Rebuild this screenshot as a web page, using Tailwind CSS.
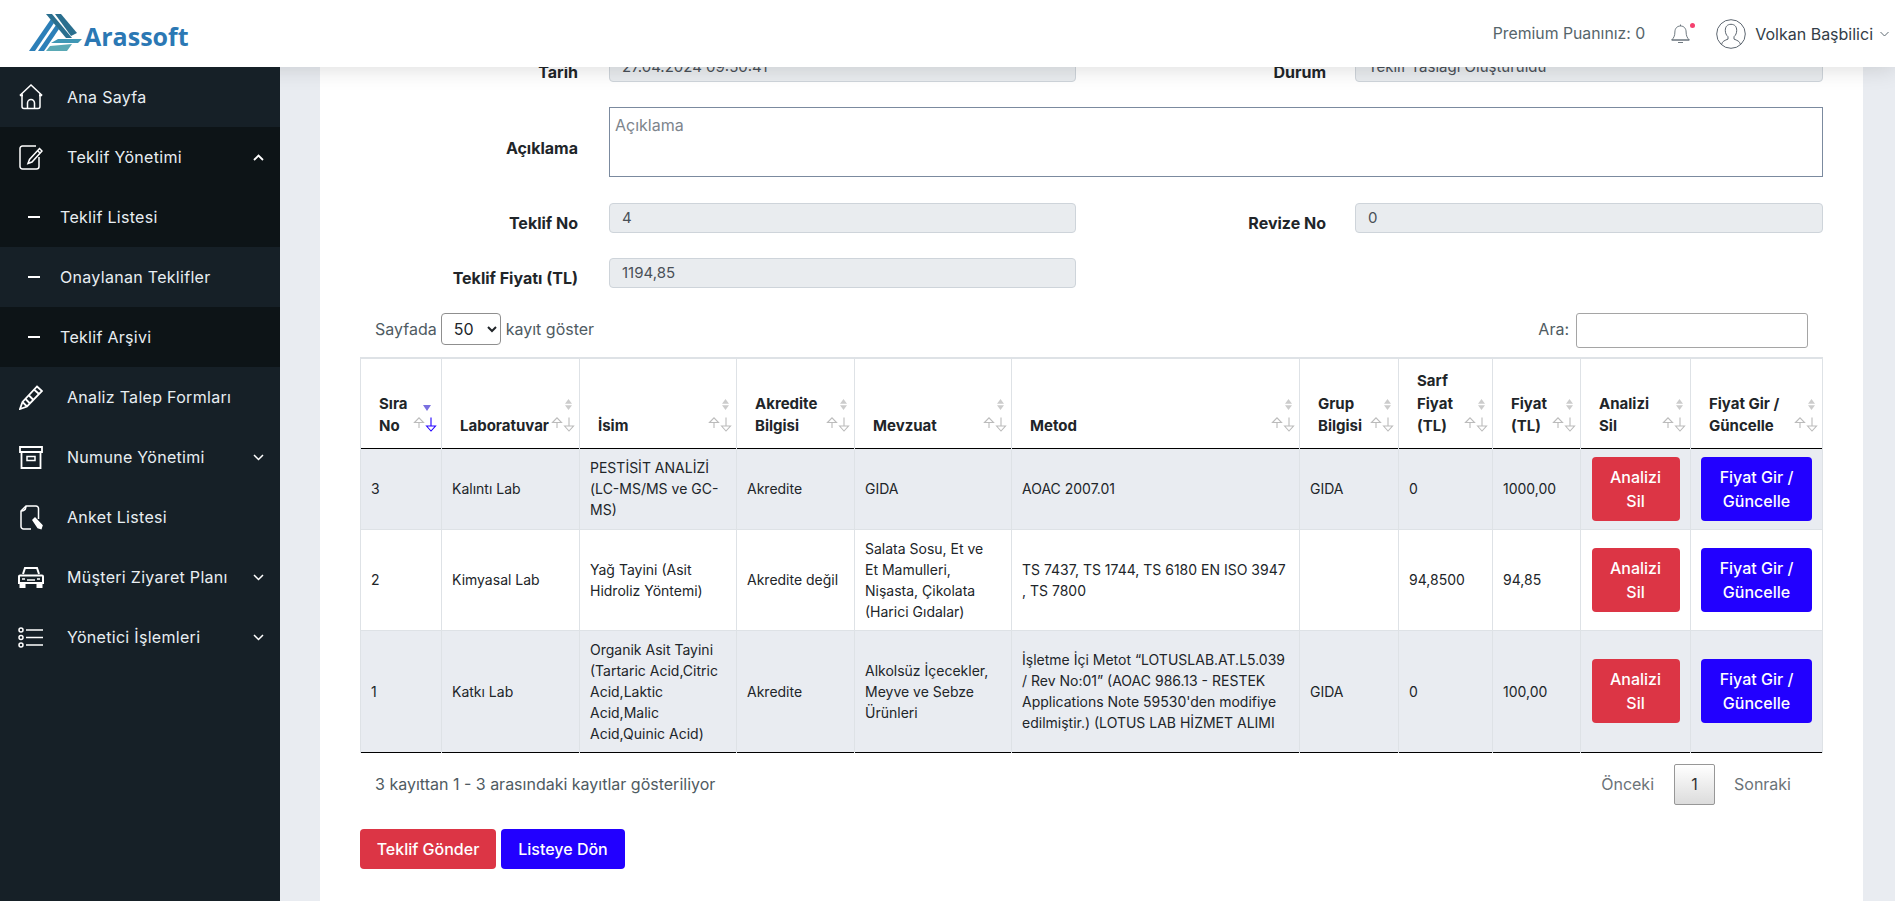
<!DOCTYPE html>
<html lang="tr">
<head>
<meta charset="utf-8">
<title>Arassoft</title>
<script src="https://cdn.jsdelivr.net/npm/@tailwindcss/browser@4"></script>
</head>
<body class="font-[Inter,sans-serif] overflow-hidden">
<div class="h-[901px] flex flex-col overflow-hidden bg-[#e9ecf1]">
  <header class="relative z-10 h-[67px] shrink-0 bg-white flex items-center shadow-[0_0_24px_rgba(0,0,0,0.16)]">
    <div class="w-[280px] shrink-0 h-full flex items-center pl-[29px]">
      <svg class="w-[54px] h-[40px] shrink-0 mt-[-2px]" viewBox="0 0 54 40">
        <polygon points="0,38 6,38 25,10 22,6" fill="#2c7fb8"/>
        <polygon points="9,38 15,38 30,16 27,12" fill="#2c7fb8"/>
        <polygon points="17,1 23,1 43,25 37,25" fill="#2a6f8f"/>
        <polygon points="26,1 32,1 48,20 42,23" fill="#2a6f8f"/>
        <polygon points="29,26 53,26 49,30 22,30" fill="#3f97b5"/>
        <polygon points="21,33 43,31 38,38 17,38" fill="#5aa9b5"/>
      </svg>
      <span class="font-['Open_Sans',sans-serif] font-bold text-[25px] leading-none text-[#2b78b4] ml-[1px] mt-[6px]">Arassoft</span>
    </div>
    <div class="ml-auto flex items-center h-full text-[16px]">
      <span class="text-[#56656b] whitespace-nowrap text-[15.8px]">Premium Puanınız: 0</span>
      <div class="relative ml-[25px] w-[21px] h-[22px]">
        <svg class="w-[21px] h-[22px]" viewBox="0 0 21 22" fill="none" stroke="#5f6a72" stroke-width="0.9"><path d="M10.5 1.5v1.5M10.5 3c-3.6 0-5.6 2.6-5.6 6 0 4-1.3 6-3.2 8h17.6c-1.900-2-3.200-4-3.200-8 0-3.400-2-6-5.600-6zM1.700 17h17.600M8 19.500h5"/></svg>
        <span class="absolute right-[-4px] top-0 w-[5px] h-[5px] rounded-full bg-[#f5406e]"></span>
      </div>
      <svg class="ml-[25px] w-[30px] h-[30px]" viewBox="0 0 30 30" fill="none" stroke="#5d6670" stroke-width="1"><circle cx="15" cy="15" r="14.3"/><path d="M5.500 25.500c.6-3.300 3.600-4.200 6.500-5.400v-2.400c-1.700-1.300-2.700-3.800-2.700-6.300 0-3.900 2.100-6.100 5.700-6.100s5.700 2.200 5.700 6.100c0 2.500-1 5-2.700 6.300v2.400c2.900 1.200 5.900 2.100 6.500 5.400"/></svg>
      <span class="ml-[9px] text-[#333d47] whitespace-nowrap">Volkan Başbilici</span>
      <svg class="ml-[7px] mr-[6px] w-[9px] h-[6px]" viewBox="0 0 9 6" fill="none" stroke="#5f6a72" stroke-width="1"><path d="M.5 1l4 4 4-4"/></svg>
    </div>
  </header>
  <div class="flex flex-1 min-h-0">
    <aside class="relative z-20 w-[280px] shrink-0 bg-[#162027] text-[#e8eef2] text-[16px]">
      <a class="h-[60px] flex items-center pl-[19px] tracking-[0.3px]">
        <svg class="w-[24px] h-[26px]" viewBox="0 0 24 26" fill="none" stroke="#fff" stroke-width="1.5"><path d="M.8 11.500 12 1l11.200 10.500"/><path d="M3 9.500V22.500a2 2 0 0 0 2 2h14a2 2 0 0 0 2-2V9.500"/><path d="M8.500 24.500V19a3.500 3.500 0 0 1 7 0v5.500"/><path d="M1 11.500h3M20 11.500h3"/></svg>
        <span class="ml-[24px]">Ana Sayfa</span>
      </a>
      <a class="h-[60px] flex items-center pl-[19px] bg-[#0d1417] tracking-[0.3px]">
        <svg class="w-[24px] h-[25px]" viewBox="0 0 24 25" fill="none" stroke="#fff" stroke-width="1.500"><path d="M20 12v9.500a2.500 2.500 0 0 1-2.500 2.500H3.500A2.500 2.500 0 0 1 1 21.500v-18A2.500 2.500 0 0 1 3.500 1H17"/><path d="M20.500 3.500l2.500 2.500L13 17l-4 1.500L10.500 14.500z"/><path d="M18.500 5.500l2.500 2.500"/></svg>
        <span class="ml-[24px]">Teklif Yönetimi</span>
        <svg class="ml-auto mr-[16px] w-[11px] h-[7px]" viewBox="0 0 11 7" fill="none" stroke="#fff" stroke-width="1.800"><path d="M1 6l4.500-4.500L10 6"/></svg>
      </a>
      <a class="h-[60px] flex items-center pl-[28px] bg-[#0d1417] tracking-[0.3px]">
        <span class="w-[12px] h-[2px] bg-white"></span><span class="ml-[20px]">Teklif Listesi</span>
      </a>
      <a class="h-[60px] flex items-center pl-[28px] tracking-[0.3px]">
        <span class="w-[12px] h-[2px] bg-white"></span><span class="ml-[20px]">Onaylanan Teklifler</span>
      </a>
      <a class="h-[60px] flex items-center pl-[28px] bg-[#0d1417] tracking-[0.3px]">
        <span class="w-[12px] h-[2px] bg-white"></span><span class="ml-[20px]">Teklif Arşivi</span>
      </a>
      <a class="h-[60px] flex items-center pl-[19px] tracking-[0.3px]">
        <svg class="w-[24px] h-[25px]" viewBox="0 0 24 25" fill="none" stroke="#fff" stroke-width="1.800"><path d="M18 1.500l5 4.500L8 21.500 1 24l2.500-7z"/><path d="M15 4.500l5 4.500M3.500 17l4.500 4.500M6.500 14l4.500 4.500M10 10.500l4.500 4.500"/></svg>
        <span class="ml-[24px]">Analiz Talep Formları</span>
      </a>
      <a class="h-[60px] flex items-center pl-[19px] tracking-[0.3px]">
        <svg class="w-[24px] h-[23px]" viewBox="0 0 24 23" fill="none" stroke="#fff" stroke-width="1.800"><path d="M1 1h22v5H1zM2.500 6v16h19V6"/><path d="M8 10.500h8v4H8z" stroke-width="1.500"/></svg>
        <span class="ml-[24px]">Numune Yönetimi</span>
        <svg class="ml-auto mr-[16px] w-[11px] h-[7px]" viewBox="0 0 11 7" fill="none" stroke="#fff" stroke-width="1.500"><path d="M1 1l4.500 4.500L10 1"/></svg>
      </a>
      <a class="h-[60px] flex items-center pl-[20px] tracking-[0.3px]">
        <svg class="w-[23px] h-[25px]" viewBox="0 0 23 25" fill="none" stroke="#fff" stroke-width="1.500"><path d="M11 24H3.500A2.500 2.500 0 0 1 1 21.500V6l5-5h10a2.500 2.500 0 0 1 2.500 2.500V14"/><path d="M1 6c3 0 5-1.500 5-5"/><path d="M13 15l2-2 7 7.500-1 3-3-1z" fill="#fff"/></svg>
        <span class="ml-[24px]">Anket Listesi</span>
      </a>
      <a class="h-[60px] flex items-center pl-[18px] tracking-[0.3px]">
        <svg class="w-[26px] h-[22px]" viewBox="0 0 26 22" fill="none" stroke="#fff" stroke-width="2"><path d="M5 8l2-6h12l2 6"/><path d="M2 9.500h22a1 1 0 0 1 1 1V17H1v-6.500a1 1 0 0 1 1-1z"/><path d="M2.500 17v4h4v-4M19.500 17v4h4v-4" fill="#fff"/><path d="M4 13h3M19 13h3M9 14h8" stroke-width="1.500"/></svg>
        <span class="ml-[23px]">Müşteri Ziyaret Planı</span>
        <svg class="ml-auto mr-[16px] w-[11px] h-[7px]" viewBox="0 0 11 7" fill="none" stroke="#fff" stroke-width="1.500"><path d="M1 1l4.500 4.500L10 1"/></svg>
      </a>
      <a class="h-[60px] flex items-center pl-[18px] tracking-[0.3px]">
        <svg class="w-[26px] h-[21px]" viewBox="0 0 26 21" fill="none" stroke="#fff" stroke-width="1.500"><circle cx="3" cy="3" r="2"/><circle cx="3" cy="10.500" r="2"/><circle cx="3" cy="18" r="2"/><path d="M8 3h17M8 10.500h17M8 18h17"/></svg>
        <span class="ml-[23px]">Yönetici İşlemleri</span>
        <svg class="ml-auto mr-[16px] w-[11px] h-[7px]" viewBox="0 0 11 7" fill="none" stroke="#fff" stroke-width="1.500"><path d="M1 1l4.500 4.500L10 1"/></svg>
      </a>
    </aside>
    <main class="flex-1 min-w-0 overflow-hidden pl-[40px] pr-[32px]">
      <div class="bg-white h-[900px] mt-[-15px] px-[40px] text-[#212529]">
        <form class="text-[16px] font-bold text-[#212529]">
          <div class="flex items-start h-[55px]">
            <label class="w-[218px] text-right pt-[10px] leading-[21px]">Tarih</label>
            <div class="ml-[31px] w-[467px] h-[30px] bg-[#e9ecef] border border-[#ced4da] rounded-[4px] pl-[12px] text-[15px] font-normal leading-[28px] text-[#495057]">27.04.2024 09:50:41</div>
            <label class="w-[250px] text-right pt-[10px] leading-[21px]">Durum</label>
            <div class="ml-[29px] w-[468px] h-[30px] bg-[#e9ecef] border border-[#ced4da] rounded-[4px] pl-[12px] text-[15px] font-normal leading-[28px] text-[#495057]">Teklif Taslağı Oluşturuldu</div>
          </div>
          <div class="flex items-start h-[96px]">
            <label class="w-[218px] text-right pt-[31px] leading-[21px]">Açıklama</label>
            <div class="ml-[31px] flex-1 h-[70px] border border-[#7b8a9f] pl-[5px] pt-[7px] text-[16px] font-normal leading-[21px] text-[#7d858c]">Açıklama</div>
          </div>
          <div class="flex items-start h-[55px]">
            <label class="w-[218px] text-right pt-[10px] leading-[21px]">Teklif No</label>
            <div class="ml-[31px] w-[467px] h-[30px] bg-[#e9ecef] border border-[#ced4da] rounded-[4px] pl-[12px] text-[15px] font-normal leading-[28px] text-[#495057]">4</div>
            <label class="w-[250px] text-right pt-[10px] leading-[21px]">Revize No</label>
            <div class="ml-[29px] w-[468px] h-[30px] bg-[#e9ecef] border border-[#ced4da] rounded-[4px] pl-[12px] text-[15px] font-normal leading-[28px] text-[#495057]">0</div>
          </div>
          <div class="flex items-start h-[55px]">
            <label class="w-[218px] text-right pt-[10px] leading-[21px]">Teklif Fiyatı (TL)</label>
            <div class="ml-[31px] w-[467px] h-[30px] bg-[#e9ecef] border border-[#ced4da] rounded-[4px] pl-[12px] text-[15px] font-normal leading-[28px] text-[#495057]">1194,85</div>
          </div>
        </form>
        <div class="flex items-center h-[32px] pl-[15px] pr-[15px] text-[16px] text-[#4f5b62]">
          <span>Sayfada</span>
          <select class="ml-[4px] mr-[5px] w-[60px] h-[32px] border border-[#8f8f8f] rounded-[4px] pl-[8px] text-[#212529] bg-white text-[16px]"><option>50</option></select>
          <span>kayıt göster</span>
          <span class="ml-auto">Ara:</span>
          <input class="ml-[7px] w-[232px] h-[35px] border border-[#a5a5a5] rounded-[3px] bg-white mt-[3px]" type="text" aria-label="Ara">
        </div>
        <table class="table-fixed border-collapse mt-[12px] w-[1462px] text-[14px] leading-[21px] text-[#212529]">
          <colgroup><col class="w-[81px]"><col class="w-[138px]"><col class="w-[157px]"><col class="w-[118px]"><col class="w-[157px]"><col class="w-[288px]"><col class="w-[99px]"><col class="w-[94px]"><col class="w-[88px]"><col class="w-[110px]"><col class="w-[132px]"></colgroup>
          <thead class="text-[15px] font-bold leading-[22.5px]">
            <tr class="h-[90px] border-t-2 border-t-[#dee2e6] border-b border-b-black">
              <th class="relative border-x border-[#dee2e6] text-left align-bottom pl-[18px] pr-[26px] pb-[10px] font-bold">Sıra No
                <span class="absolute right-[10px] bottom-[37px] w-0 h-0 border-x-[4px] border-x-transparent border-t-[6px] border-t-[#7a70e0]"></span>
                <svg class="absolute right-[4px] bottom-[16px] w-[24px] h-[15px]" viewBox="0 0 24 15" fill="none" stroke="#bbb" stroke-width="1.100"><path d="M6 11V5M1.500 5.500 6 .8l4.500 4.700z"/><path d="M18 .5V9M13.500 9 18 14l4.500-5z" stroke="#2200ff"/></svg>
              </th>
              <th class="relative border-x border-[#dee2e6] text-left align-bottom pl-[18px] pr-[26px] pb-[10px] font-bold">Laboratuvar
                <svg class="absolute right-[7px] bottom-[38px] w-[7px] h-[11px]" viewBox="0 0 7 11" fill="#ccc"><path d="M3.500 0 7 4.800H0zM0 6.200h7L3.500 11z"/></svg>
                <svg class="absolute right-[4px] bottom-[16px] w-[24px] h-[15px]" viewBox="0 0 24 15" fill="none" stroke="#bbb" stroke-width="1.100"><path d="M6 11V5M1.500 5.500 6 .8l4.500 4.700z"/><path d="M18 .5V9M13.500 9 18 14l4.500-5z"/></svg>
              </th>
              <th class="relative border-x border-[#dee2e6] text-left align-bottom pl-[18px] pr-[26px] pb-[10px] font-bold">İsim
                <svg class="absolute right-[7px] bottom-[38px] w-[7px] h-[11px]" viewBox="0 0 7 11" fill="#ccc"><path d="M3.500 0 7 4.800H0zM0 6.200h7L3.500 11z"/></svg>
                <svg class="absolute right-[4px] bottom-[16px] w-[24px] h-[15px]" viewBox="0 0 24 15" fill="none" stroke="#bbb" stroke-width="1.100"><path d="M6 11V5M1.500 5.500 6 .8l4.500 4.700z"/><path d="M18 .5V9M13.500 9 18 14l4.500-5z"/></svg>
              </th>
              <th class="relative border-x border-[#dee2e6] text-left align-bottom pl-[18px] pr-[26px] pb-[10px] font-bold">Akredite Bilgisi
                <svg class="absolute right-[7px] bottom-[38px] w-[7px] h-[11px]" viewBox="0 0 7 11" fill="#ccc"><path d="M3.500 0 7 4.800H0zM0 6.200h7L3.500 11z"/></svg>
                <svg class="absolute right-[4px] bottom-[16px] w-[24px] h-[15px]" viewBox="0 0 24 15" fill="none" stroke="#bbb" stroke-width="1.100"><path d="M6 11V5M1.500 5.500 6 .8l4.500 4.700z"/><path d="M18 .5V9M13.500 9 18 14l4.500-5z"/></svg>
              </th>
              <th class="relative border-x border-[#dee2e6] text-left align-bottom pl-[18px] pr-[26px] pb-[10px] font-bold">Mevzuat
                <svg class="absolute right-[7px] bottom-[38px] w-[7px] h-[11px]" viewBox="0 0 7 11" fill="#ccc"><path d="M3.500 0 7 4.800H0zM0 6.200h7L3.500 11z"/></svg>
                <svg class="absolute right-[4px] bottom-[16px] w-[24px] h-[15px]" viewBox="0 0 24 15" fill="none" stroke="#bbb" stroke-width="1.100"><path d="M6 11V5M1.500 5.500 6 .8l4.500 4.700z"/><path d="M18 .5V9M13.500 9 18 14l4.500-5z"/></svg>
              </th>
              <th class="relative border-x border-[#dee2e6] text-left align-bottom pl-[18px] pr-[26px] pb-[10px] font-bold">Metod
                <svg class="absolute right-[7px] bottom-[38px] w-[7px] h-[11px]" viewBox="0 0 7 11" fill="#ccc"><path d="M3.500 0 7 4.800H0zM0 6.200h7L3.500 11z"/></svg>
                <svg class="absolute right-[4px] bottom-[16px] w-[24px] h-[15px]" viewBox="0 0 24 15" fill="none" stroke="#bbb" stroke-width="1.100"><path d="M6 11V5M1.500 5.500 6 .8l4.500 4.700z"/><path d="M18 .5V9M13.500 9 18 14l4.500-5z"/></svg>
              </th>
              <th class="relative border-x border-[#dee2e6] text-left align-bottom pl-[18px] pr-[26px] pb-[10px] font-bold">Grup Bilgisi
                <svg class="absolute right-[7px] bottom-[38px] w-[7px] h-[11px]" viewBox="0 0 7 11" fill="#ccc"><path d="M3.500 0 7 4.800H0zM0 6.200h7L3.500 11z"/></svg>
                <svg class="absolute right-[4px] bottom-[16px] w-[24px] h-[15px]" viewBox="0 0 24 15" fill="none" stroke="#bbb" stroke-width="1.100"><path d="M6 11V5M1.500 5.500 6 .8l4.500 4.700z"/><path d="M18 .5V9M13.500 9 18 14l4.500-5z"/></svg>
              </th>
              <th class="relative border-x border-[#dee2e6] text-left align-bottom pl-[18px] pr-[26px] pb-[10px] font-bold">Sarf Fiyat (TL)
                <svg class="absolute right-[7px] bottom-[38px] w-[7px] h-[11px]" viewBox="0 0 7 11" fill="#ccc"><path d="M3.500 0 7 4.800H0zM0 6.200h7L3.500 11z"/></svg>
                <svg class="absolute right-[4px] bottom-[16px] w-[24px] h-[15px]" viewBox="0 0 24 15" fill="none" stroke="#bbb" stroke-width="1.100"><path d="M6 11V5M1.500 5.500 6 .8l4.500 4.700z"/><path d="M18 .5V9M13.500 9 18 14l4.500-5z"/></svg>
              </th>
              <th class="relative border-x border-[#dee2e6] text-left align-bottom pl-[18px] pr-[26px] pb-[10px] font-bold">Fiyat (TL)
                <svg class="absolute right-[7px] bottom-[38px] w-[7px] h-[11px]" viewBox="0 0 7 11" fill="#ccc"><path d="M3.500 0 7 4.800H0zM0 6.200h7L3.500 11z"/></svg>
                <svg class="absolute right-[4px] bottom-[16px] w-[24px] h-[15px]" viewBox="0 0 24 15" fill="none" stroke="#bbb" stroke-width="1.100"><path d="M6 11V5M1.500 5.500 6 .8l4.500 4.700z"/><path d="M18 .5V9M13.500 9 18 14l4.500-5z"/></svg>
              </th>
              <th class="relative border-x border-[#dee2e6] text-left align-bottom pl-[18px] pr-[26px] pb-[10px] font-bold">Analizi Sil
                <svg class="absolute right-[7px] bottom-[38px] w-[7px] h-[11px]" viewBox="0 0 7 11" fill="#ccc"><path d="M3.500 0 7 4.800H0zM0 6.200h7L3.500 11z"/></svg>
                <svg class="absolute right-[4px] bottom-[16px] w-[24px] h-[15px]" viewBox="0 0 24 15" fill="none" stroke="#bbb" stroke-width="1.100"><path d="M6 11V5M1.500 5.500 6 .8l4.500 4.700z"/><path d="M18 .5V9M13.500 9 18 14l4.500-5z"/></svg>
              </th>
              <th class="relative border-x border-[#dee2e6] text-left align-bottom pl-[18px] pr-[26px] pb-[10px] font-bold">Fiyat Gir / Güncelle
                <svg class="absolute right-[7px] bottom-[38px] w-[7px] h-[11px]" viewBox="0 0 7 11" fill="#ccc"><path d="M3.500 0 7 4.800H0zM0 6.200h7L3.500 11z"/></svg>
                <svg class="absolute right-[4px] bottom-[16px] w-[24px] h-[15px]" viewBox="0 0 24 15" fill="none" stroke="#bbb" stroke-width="1.100"><path d="M6 11V5M1.500 5.500 6 .8l4.500 4.700z"/><path d="M18 .5V9M13.500 9 18 14l4.500-5z"/></svg>
              </th>
            </tr>
          </thead>
          <tbody>
            <tr class="bg-[#e9ecf1] border-b border-[#dee2e6]">
              <td class="border-x border-[#dee2e6] px-[10px] py-[8px]">3</td>
              <td class="border-x border-[#dee2e6] px-[10px] py-[8px]">Kalıntı Lab</td>
              <td class="border-x border-[#dee2e6] px-[10px] py-[8px]">PESTİSİT ANALİZİ (LC-MS/MS ve GC-MS)</td>
              <td class="border-x border-[#dee2e6] px-[10px] py-[8px]">Akredite</td>
              <td class="border-x border-[#dee2e6] pl-[10px] pr-[20px] py-[8px]">GIDA</td>
              <td class="border-x border-[#dee2e6] px-[10px] py-[8px]">AOAC 2007.01</td>
              <td class="border-x border-[#dee2e6] px-[10px] py-[8px]">GIDA</td>
              <td class="border-x border-[#dee2e6] px-[10px] py-[8px]">0</td>
              <td class="border-x border-[#dee2e6] px-[10px] py-[8px]">1000,00</td>
              <td class="border-x border-[#dee2e6] px-[10px] py-[8px]"><button type="button" class="block w-[88px] h-[64px] px-[12px] mx-auto bg-[#dc3545] text-white rounded-[4px] text-[16px] font-medium leading-[24px]">Analizi Sil</button></td>
              <td class="border-x border-[#dee2e6] px-[10px] py-[8px]"><button type="button" class="block w-[111px] h-[64px] px-[12px] mx-auto bg-[#2200ff] text-white rounded-[4px] text-[16px] font-medium leading-[24px]">Fiyat Gir / Güncelle</button></td>
            </tr>
            <tr class="bg-white border-b border-[#dee2e6]">
              <td class="border-x border-[#dee2e6] px-[10px] py-[8px]">2</td>
              <td class="border-x border-[#dee2e6] px-[10px] py-[8px]">Kimyasal Lab</td>
              <td class="border-x border-[#dee2e6] px-[10px] py-[8px]">Yağ Tayini (Asit Hidroliz Yöntemi)</td>
              <td class="border-x border-[#dee2e6] px-[10px] py-[8px]">Akredite değil</td>
              <td class="border-x border-[#dee2e6] pl-[10px] pr-[20px] py-[8px]">Salata Sosu, Et ve Et Mamulleri, Nişasta, Çikolata (Harici Gıdalar)</td>
              <td class="border-x border-[#dee2e6] px-[10px] py-[8px]">TS 7437, TS 1744, TS 6180 EN ISO 3947 , TS 7800</td>
              <td class="border-x border-[#dee2e6] px-[10px] py-[8px]"></td>
              <td class="border-x border-[#dee2e6] px-[10px] py-[8px]">94,8500</td>
              <td class="border-x border-[#dee2e6] px-[10px] py-[8px]">94,85</td>
              <td class="border-x border-[#dee2e6] px-[10px] py-[8px]"><button type="button" class="block w-[88px] h-[64px] px-[12px] mx-auto bg-[#dc3545] text-white rounded-[4px] text-[16px] font-medium leading-[24px]">Analizi Sil</button></td>
              <td class="border-x border-[#dee2e6] px-[10px] py-[8px]"><button type="button" class="block w-[111px] h-[64px] px-[12px] mx-auto bg-[#2200ff] text-white rounded-[4px] text-[16px] font-medium leading-[24px]">Fiyat Gir / Güncelle</button></td>
            </tr>
            <tr class="bg-[#e9ecf1] border-b border-b-black">
              <td class="border-x border-[#dee2e6] px-[10px] py-[8px]">1</td>
              <td class="border-x border-[#dee2e6] px-[10px] py-[8px]">Katkı Lab</td>
              <td class="border-x border-[#dee2e6] px-[10px] py-[8px]">Organik Asit Tayini (Tartaric Acid,Citric Acid,Laktic Acid,Malic Acid,Quinic Acid)</td>
              <td class="border-x border-[#dee2e6] px-[10px] py-[8px]">Akredite</td>
              <td class="border-x border-[#dee2e6] pl-[10px] pr-[20px] py-[8px]">Alkolsüz İçecekler, Meyve ve Sebze Ürünleri</td>
              <td class="border-x border-[#dee2e6] px-[10px] py-[8px]">İşletme İçi Metot “LOTUSLAB.AT.L5.039 / Rev No:01” (AOAC 986.13 - RESTEK Applications Note 59530'den modifiye edilmiştir.) (LOTUS LAB HİZMET ALIMI</td>
              <td class="border-x border-[#dee2e6] px-[10px] py-[8px]">GIDA</td>
              <td class="border-x border-[#dee2e6] px-[10px] py-[8px]">0</td>
              <td class="border-x border-[#dee2e6] px-[10px] py-[8px]">100,00</td>
              <td class="border-x border-[#dee2e6] px-[10px] py-[8px]"><button type="button" class="block w-[88px] h-[64px] px-[12px] mx-auto bg-[#dc3545] text-white rounded-[4px] text-[16px] font-medium leading-[24px]">Analizi Sil</button></td>
              <td class="border-x border-[#dee2e6] px-[10px] py-[8px]"><button type="button" class="block w-[111px] h-[64px] px-[12px] mx-auto bg-[#2200ff] text-white rounded-[4px] text-[16px] font-medium leading-[24px]">Fiyat Gir / Güncelle</button></td>
            </tr>
          </tbody>
        </table>
        <div class="flex items-center h-[41px] mt-[11px] pl-[15px] text-[16px] text-[#4f5b62]">
          <span>3 kayıttan 1 - 3 arasındaki kayıtlar gösteriliyor</span>
          <a class="ml-auto text-[#6b7378]">Önceki</a>
          <span class="ml-[20px] w-[41px] h-[41px] flex items-center justify-center border border-[#979797] rounded-[2px] bg-linear-to-b from-white to-[#dcdcdc] text-[#333]">1</span>
          <a class="ml-[19px] mr-[32px] text-[#6b7378]">Sonraki</a>
        </div>
        <div class="flex gap-[5px] mt-[24px]">
          <button type="button" class="w-[136px] h-[40px] bg-[#dc3545] text-white rounded-[4px] text-[16px] font-medium">Teklif Gönder</button>
          <button type="button" class="w-[124px] h-[40px] bg-[#2200ff] text-white rounded-[4px] text-[16px] font-medium">Listeye Dön</button>
        </div>
      </div>
    </main>
  </div>
</div>
</body>
</html>
